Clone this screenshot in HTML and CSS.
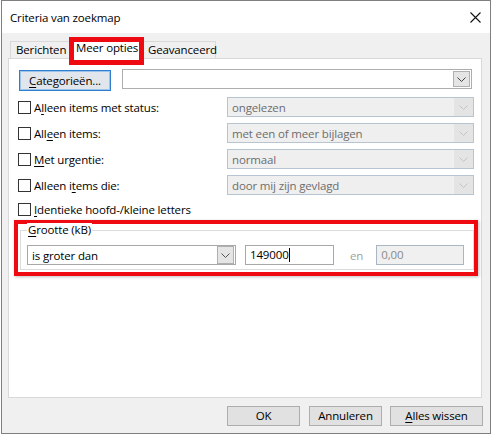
FILE: index.html
```html
<!DOCTYPE html>
<html>
<head>
<meta charset="utf-8">
<link rel="stylesheet" href="styles.css">
</head>
<body>
<div class="window">
  <div class="titlebar">
    <span class="title">Criteria van zoekmap</span>
    <svg class="close" width="11" height="11" viewBox="0 0 11 11"><path d="M0.5 0.5 L10.5 10.5 M10.5 0.5 L0.5 10.5" stroke="#111" stroke-width="1.1" fill="none"/></svg>
  </div>
  <div class="client">
    <div class="tabs">
      <div class="tab t1">Berichten</div>
      <div class="tab t2 active">Meer opties</div>
      <div class="tab t3">Geavanceerd</div>
    </div>
    <div class="panel">
      <div class="row-cat">
        <button class="btn cat"><u>C</u>ategorieën...</button>
        <div class="combo"><span class="arrow-box"><svg width="9" height="5" viewBox="0 0 9 5"><path d="M0.5 0.5 L4.5 4.5 L8.5 0.5" stroke="#444" stroke-width="1" fill="none"/></svg></span></div>
      </div>
      <div class="opts">
        <label class="chk"><span class="box"></span><span>A<u>l</u>leen items met status:</span></label>
        <div class="dd"><span class="dd-text">ongelezen</span><span class="dd-arrow"><svg width="9" height="5" viewBox="0 0 9 5"><path d="M0.5 0.5 L4.5 4.5 L8.5 0.5" stroke="#c4c4c4" stroke-width="1" fill="none"/></svg></span></div>
        <label class="chk"><span class="box"></span><span>All<u>e</u>en items:</span></label>
        <div class="dd"><span class="dd-text">met een of meer bijlagen</span><span class="dd-arrow"><svg width="9" height="5" viewBox="0 0 9 5"><path d="M0.5 0.5 L4.5 4.5 L8.5 0.5" stroke="#c4c4c4" stroke-width="1" fill="none"/></svg></span></div>
        <label class="chk"><span class="box"></span><span><u>M</u>et urgentie:</span></label>
        <div class="dd"><span class="dd-text">normaal</span><span class="dd-arrow"><svg width="9" height="5" viewBox="0 0 9 5"><path d="M0.5 0.5 L4.5 4.5 L8.5 0.5" stroke="#c4c4c4" stroke-width="1" fill="none"/></svg></span></div>
        <label class="chk"><span class="box"></span><span>Alleen i<u>t</u>ems die:</span></label>
        <div class="dd"><span class="dd-text">door mij zijn gevlagd</span><span class="dd-arrow"><svg width="9" height="5" viewBox="0 0 9 5"><path d="M0.5 0.5 L4.5 4.5 L8.5 0.5" stroke="#c4c4c4" stroke-width="1" fill="none"/></svg></span></div>
      </div>
      <label class="chk single"><span class="box"></span><span><u>I</u>dentieke hoofd-/kleine letters</span></label>
      <div class="annot">
        <div class="group">
          <div class="group-title"><u>G</u>rootte (kB)</div>
          <div class="size-row">
            <div class="sel"><span class="sel-text">is groter dan</span><span class="arrow-box big"><svg width="9" height="5" viewBox="0 0 9 5"><path d="M0.5 0.5 L4.5 4.5 L8.5 0.5" stroke="#555" stroke-width="1" fill="none"/></svg></span></div>
            <div class="input">149000<span class="caret"></span></div>
            <span class="en">en</span>
            <div class="input dis">0,00</div>
          </div>
        </div>
      </div>
    </div>
    <div class="footer">
      <button class="btn f-ok">OK</button>
      <button class="btn f-cancel">Annuleren</button>
      <button class="btn f-clear"><u>A</u>lles wissen</button>
    </div>
  </div>
</div>
</body>
</html>
```

FILE: styles.css
```css
*, *::before, *::after { box-sizing: border-box; }
html, body { margin: 0; padding: 0; background: #ffffff; }
body {
  font-family: "Open Sans", "Noto Sans", sans-serif;
  font-size: 11.5px;
  letter-spacing: -0.15px;
  color: #000;
}
u { text-decoration: underline; text-underline-offset: 2px; }

.window {
  margin-left: 1px;
  width: 490px;
  height: 434px;
  border: 1px solid #7f7f7f;
  display: flex;
  flex-direction: column;
}

.titlebar {
  height: 32px;
  background: #ffffff;
  display: flex;
  align-items: center;
  justify-content: space-between;
  padding: 0 9px 0 8px;
  flex: none;
}
.title { color: #000; }
.close { display: block; margin-top: 1px; }

.client {
  flex: 1;
  background: #f0f0f0;
  padding: 0 8px 0 6px;
  display: flex;
  flex-direction: column;
}

.tabs {
  display: flex;
  align-items: flex-end;
  height: 25px;
  padding-left: 2px;
  position: relative;
  z-index: 2;
}
.tab {
  height: 17px;
  border: 1px solid #d9d9d9;
  border-bottom: none;
  background: #f0f0f0;
  line-height: 15px;
  white-space: nowrap;
  position: relative;
}
.t1 { width: 61px; padding-left: 5px; margin-right: -1px; }
.t2 { width: 71px; }
.t3 { width: 76px; padding-left: 7px; margin-left: -1px; }
.tab.active {
  height: 22px;
  margin-bottom: -1px;
  background: #ffffff;
  padding-left: 5px;
  line-height: 19px;
  z-index: 3;
}
.tab.active::after {
  content: "";
  position: absolute;
  left: -2px;
  top: -1px;
  width: 75px;
  height: 28px;
  border: 5px solid #ee0a10;
}

.panel {
  height: 340px;
  background: #ffffff;
  border: 1px solid #d9d9d9;
  padding: 10px 7px 0 9px;
  display: flex;
  flex-direction: column;
}

.row-cat {
  display: flex;
  align-items: flex-start;
  height: 22px;
}
.btn {
  font-family: inherit;
  font-size: 11.5px;
  letter-spacing: -0.15px;
  color: #000;
  background: #e1e1e1;
  border: 1px solid #adadad;
  padding: 0;
  margin: 0;
  height: 20px;
  line-height: 16px;
}
.btn.cat {
  width: 92px;
  height: 21px;
  margin: 1px 0 0 1px;
  background: #e0e6ec;
  border: 1px solid #2f7fd0;
  box-shadow: inset 0 0 0 1px #9cc3ea;
}
.combo {
  margin-left: 11px;
  width: 350px;
  height: 20px;
  border: 1px solid #adadad;
  background: #fff;
  display: flex;
  justify-content: flex-end;
  align-items: center;
  padding-right: 1px;
}
.arrow-box {
  width: 17px;
  height: 16px;
  border: 1px solid #b0b0b0;
  background: #e5e5e5;
  display: flex;
  align-items: center;
  justify-content: center;
}
.arrow-box svg { display: block; }

.opts {
  margin-top: 6px;
  display: grid;
  grid-template-columns: 1fr 247px;
  grid-auto-rows: 20px;
  row-gap: 6px;
}
.chk {
  display: flex;
  align-items: center;
  height: 20px;
  white-space: nowrap;
}
.box {
  width: 13px;
  height: 13px;
  border: 1px solid #333333;
  background: #fff;
  margin-right: 3px;
  flex: none;
}
.chk.single { margin-top: 4px; }

.dd {
  display: flex;
  align-items: center;
  height: 20px;
  border: 1px solid #b7c5d3;
  background: #efefef;
  color: #6d6d6d;
}
.dd-text { flex: 1; padding-left: 4px; }
.dd-arrow {
  width: 19px;
  height: 18px;
  background: #e4e4e4;
  display: flex;
  align-items: center;
  justify-content: center;
}

.annot {
  margin: 1px 0 0 -4px;
  width: 464px;
  height: 56px;
  border: 4px solid #ee0a10;
  box-shadow: 1px 1px 3px rgba(0,0,0,0.25);
  padding: 6px 0 0 2px;
}
.group {
  width: 454px;
  height: 40px;
  border: 1px solid #dcdcdc;
  padding: 0 0 0 6px;
}
.group-title {
  width: fit-content;
  margin-top: -8px;
  height: 14px;
  line-height: 14px;
  background: #fff;
  padding: 0 1px;
}
.size-row {
  margin-top: 8px;
  display: flex;
  align-items: center;
  height: 20px;
}
.sel {
  width: 209px;
  height: 20px;
  border: 1px solid #a8a8a8;
  background: #fff;
  display: flex;
  align-items: center;
  padding-right: 1px;
}
.sel-text { flex: 1; padding-left: 4px; }
.arrow-box.big { height: 18px; width: 17px; }
.input {
  margin-left: 9px;
  width: 89px;
  height: 20px;
  border: 1px solid #a8a8a8;
  background: #fff;
  padding-left: 4px;
  line-height: 18px;
  display: flex;
  align-items: center;
}
.caret {
  display: inline-block;
  width: 1px;
  height: 14px;
  background: #000;
}
.en { margin-left: 16px; color: #a0a0a0; }
.input.dis {
  margin-left: 13px;
  width: 88px;
  background: #f0f0f0;
  border-color: #a9b6c3;
  color: #8a8a8a;
}

.footer {
  display: flex;
  justify-content: flex-end;
  padding-top: 8px;
  margin-right: -1px;
}
.f-ok { width: 73px; }
.f-cancel { width: 73px; margin-left: 9px; }
.f-clear { width: 93px; margin-left: 8px; }
```
